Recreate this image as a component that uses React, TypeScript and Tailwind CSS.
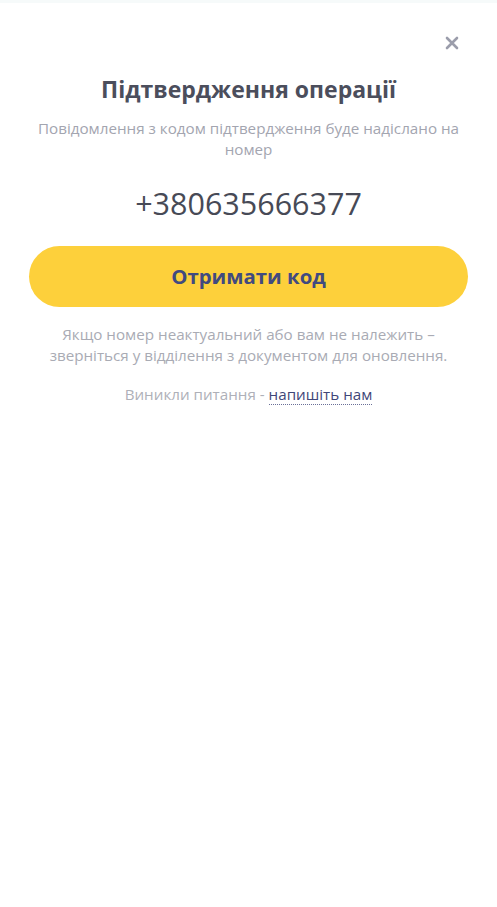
import React from 'react';

export default function App() {
  return (
    <div
      className="min-h-[907px] bg-white border-t-[3px] border-[#f6fafa]"
      style={{ fontFamily: '"Open Sans", "Noto Sans", sans-serif' }}
    >
      <div className="flex justify-end px-[38px] pt-[33px]">
        <button className="w-[14px] h-[14px] text-[#9b9dab]" aria-label="Закрити">
          <svg viewBox="0 0 14 14" className="w-[14px] h-[14px]">
            <path d="M2 2 L12 12 M12 2 L2 12" stroke="currentColor" strokeWidth="2.6" strokeLinecap="round" />
          </svg>
        </button>
      </div>

      <div className="flex flex-col items-center px-[29px] text-center">
        <h1 className="mt-[24px] text-[23px] leading-[30px] font-bold text-[#4b4e5c]">
          Підтвердження операції
        </h1>
        <p className="mt-[14px] text-[15.2px] leading-[21px] text-[#a3a5b0] px-[4px]">
          Повідомлення з кодом підтвердження буде надіслано на номер
        </p>
        <div className="mt-[23px] text-[30.5px] leading-[40px] text-[#474a56]">+380635666377</div>

        <button className="mt-[23px] w-full h-[61px] rounded-full bg-[#fdd03b] text-[20.4px] font-bold text-[#414a80]">
          Отримати код
        </button>

        <p className="mt-[17px] text-[15.2px] leading-[21px] text-[#a9abb4]">
          Якщо номер неактуальний або вам не належить –<br />
          зверніться у відділення з документом для оновлення.
        </p>

        <p className="mt-[18px] text-[15.2px] leading-[21px] text-[#aeb0b8]">
          Виникли питання -{' '}
          <a className="text-[#3f4678] border-b border-dotted border-[#6a7098]">напишіть нам</a>
        </p>
      </div>
    </div>
  );
}
